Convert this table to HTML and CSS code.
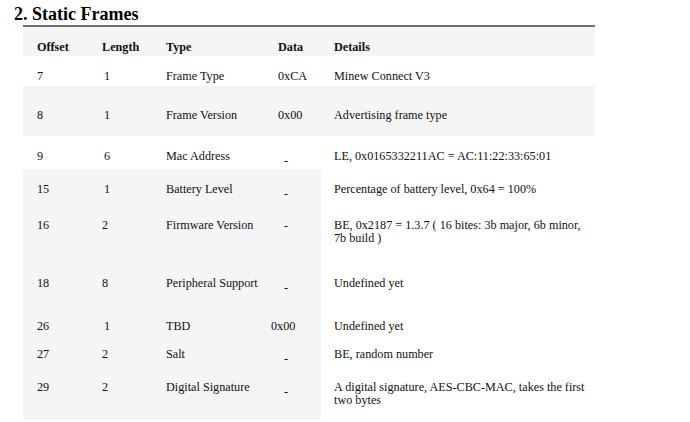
FILE: index.html
```html
<!DOCTYPE html>
<html>
<head>
<meta charset="utf-8">
<link rel="stylesheet" href="styles.css">
</head>
<body>
<h2 class="title">2. Static Frames</h2>
<table class="frames">
  <colgroup>
    <col class="c-off"><col class="c-len"><col class="c-type"><col class="c-data"><col class="c-det">
  </colgroup>
  <thead>
    <tr class="gray h30">
      <th>Offset</th><th>Length</th><th>Type</th><th>Data</th><th>Details</th>
    </tr>
  </thead>
  <tbody>
    <tr class="h30">
      <td>7</td><td class="len">1</td><td>Frame Type</td><td>0xCA</td><td>Minew Connect V3</td>
    </tr>
    <tr class="gray h50 tall">
      <td>8</td><td class="len">1</td><td>Frame Version</td><td>0x00</td><td>Advertising frame type</td>
    </tr>
    <tr class="h33">
      <td>9</td><td class="len">6</td><td>Mac Address</td><td><span class="dash low">-</span></td><td>LE, 0x0165332211AC = AC:11:22:33:65:01</td>
    </tr>
    <tr class="part h36">
      <td>15</td><td class="len">1</td><td>Battery Level</td><td><span class="dash low">-</span></td><td>Percentage of battery level, 0x64 = 100%</td>
    </tr>
    <tr class="part h58">
      <td>16</td><td>2</td><td>Firmware Version</td><td><span class="dash">-</span></td><td>BE, 0x2187 = 1.3.7 ( 16 bites: 3b major, 6b minor,<br>7b build )</td>
    </tr>
    <tr class="part h43">
      <td>18</td><td>8</td><td>Peripheral Support</td><td><span class="dash low">-</span></td><td>Undefined yet</td>
    </tr>
    <tr class="part h28">
      <td>26</td><td class="len">1</td><td>TBD</td><td><span class="shift">0x00</span></td><td>Undefined yet</td>
    </tr>
    <tr class="part h33">
      <td>27</td><td>2</td><td>Salt</td><td><span class="dash low">-</span></td><td>BE, random number</td>
    </tr>
    <tr class="part h53">
      <td>29</td><td>2</td><td>Digital Signature</td><td><span class="dash low">-</span></td><td>A digital signature, AES-CBC-MAC, takes the first<br>two bytes</td>
    </tr>
  </tbody>
</table>
</body>
</html>
```

FILE: styles.css
```css
html, body {
  margin: 0;
  padding: 0;
  background: #ffffff;
}

body {
  font-family: "Liberation Serif", "Times New Roman", serif;
  color: #111111;
}

.title {
  margin: 4px 0 1px 14px;
  font-size: 18px;
  line-height: 20px;
  font-weight: bold;
  color: #000000;
}

.frames {
  margin-left: 23px;
  width: 572px;
  table-layout: fixed;
  border-collapse: collapse;
  border-top: 2px solid #707070;
  font-size: 12.2px;
  line-height: 13px;
}

.c-off { width: 65px; }
.c-len { width: 64px; }
.c-type { width: 112px; }
.c-data { width: 57px; }
.c-det { width: 274px; }

.frames th,
.frames td {
  text-align: left;
  vertical-align: top;
  padding: 14px 4px 0 14px;
  white-space: nowrap;
  box-sizing: border-box;
}

.frames th {
  font-weight: bold;
  color: #111111;
}

.frames td:last-child,
.frames th:last-child {
  padding-left: 13px;
}

.frames td.len {
  padding-left: 16px;
}

.gray td,
.gray th {
  background: #f5f5f5;
}

.part td {
  background: #f5f5f5;
}

.part td:last-child {
  background: #ffffff;
}

.tall td {
  padding-top: 23px;
}

.h28 { height: 28px; }
.h30 { height: 30px; }
.h33 { height: 33px; }
.h36 { height: 36px; }
.h43 { height: 43px; }
.h50 { height: 50px; }
.h53 { height: 53px; }
.h58 { height: 58px; }

.dash {
  display: inline-block;
  padding-left: 6px;
}

.dash.low {
  vertical-align: -4px;
}

.shift {
  display: inline-block;
  margin-left: -7px;
}
```
